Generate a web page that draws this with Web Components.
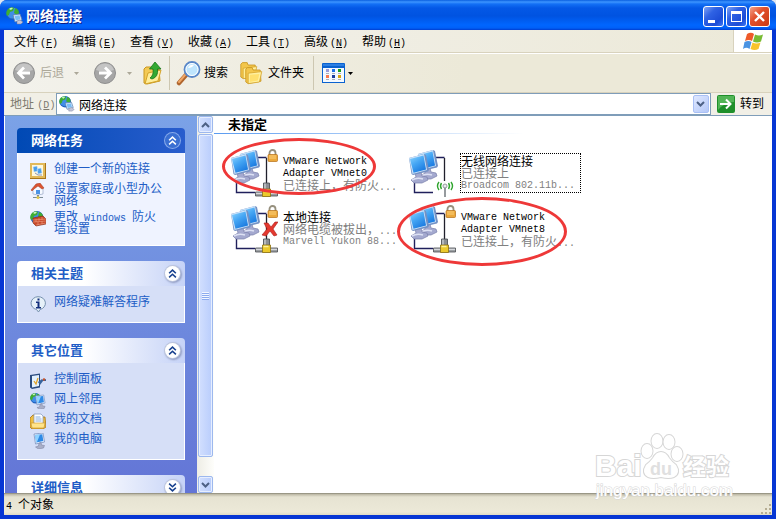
<!DOCTYPE html>
<html lang="zh-CN">
<head>
<meta charset="utf-8">
<title>网络连接</title>
<style>
    body {
        margin: 0;
        background: #dfe6f2;
        font: 12px/12px "Liberation Sans", "Noto Sans CJK SC", sans-serif;
        color: #000;
    }
</style>
</head>
<body>
<xp-window>
    <xp-titlebar slot="title">网络连接</xp-titlebar>
    <xp-menubar slot="bars">
        <xp-menu key="F">文件</xp-menu>
        <xp-menu key="E">编辑</xp-menu>
        <xp-menu key="V">查看</xp-menu>
        <xp-menu key="A">收藏</xp-menu>
        <xp-menu key="T">工具</xp-menu>
        <xp-menu key="N">高级</xp-menu>
        <xp-menu key="H">帮助</xp-menu>
    </xp-menubar>
    <xp-toolbar slot="bars"></xp-toolbar>
    <xp-addressbar slot="bars" value="网络连接"></xp-addressbar>

    <xp-taskpane slot="side">
        <xp-group primary heading="网络任务">
            <xp-task icon="newconn">创建一个新的连接</xp-task>
            <xp-task icon="home">设置家庭或小型办公网络</xp-task>
            <xp-task icon="firewall">更改<xp-latin> Windows </xp-latin>防火墙设置</xp-task>
        </xp-group>
        <xp-group heading="相关主题">
            <xp-task icon="info">网络疑难解答程序</xp-task>
        </xp-group>
        <xp-group heading="其它位置">
            <xp-task icon="control">控制面板</xp-task>
            <xp-task icon="places">网上邻居</xp-task>
            <xp-task icon="docs">我的文档</xp-task>
            <xp-task icon="computer">我的电脑</xp-task>
        </xp-group>
        <xp-group collapsed heading="详细信息"></xp-group>
    </xp-taskpane>

    <xp-folder heading="未指定">
        <xp-connection kind="lan" lock marked>
            <xp-latin slot="name">VMware Network Adapter VMnet0</xp-latin>
            <span>已连接上，有防火<xp-latin>...</xp-latin></span>
        </xp-connection>
        <xp-connection kind="wifi" selected>
            <span slot="name">无线网络连接</span>
            <span>已连接上</span>
            <xp-latin>Broadcom 802.11b...</xp-latin>
        </xp-connection>
        <xp-connection kind="lan" lock broken>
            <span slot="name">本地连接</span>
            <span>网络电缆被拔出，<xp-latin>...</xp-latin></span>
            <xp-latin>Marvell Yukon 88...</xp-latin>
        </xp-connection>
        <xp-connection kind="lan" lock marked="wide">
            <xp-latin slot="name">VMware Network Adapter VMnet8</xp-latin>
            <span>已连接上，有防火<xp-latin>...</xp-latin></span>
        </xp-connection>
    </xp-folder>

    <xp-statusbar slot="status"><xp-latin>4 </xp-latin>个对象</xp-statusbar>
    <xp-watermark slot="overlay"></xp-watermark>
</xp-window>

<script>
const GLOBE = `
    <circle cx="7" cy="6.500" r="6.500" fill="#1f5fbe"/><circle cx="6.500" cy="6" r="5.500" fill="#3f8ee8"/>
    <path d="M2 2q3-3 6-1l-1 3-3 1-1 3-2 1q-2-4 1-7zM9 1q4 1 4 5l-2 2-3-2z" fill="#3fae32"/>
    <path d="M3 2q2-2 4-1l-2 2z" fill="#c9f5bf"/>`;

const PC = `
    <path d="M4 1l9-1 1.500 9-9 2z" fill="#eef4ff" stroke="#6d87b8" stroke-width=".7"/>
    <path d="M5 2l7.300-.8 1 6.800-7 1.500z" fill="#2f8ae6"/>
    <path d="M5 2l5-.5-3 7.500-1 .4z" fill="#8fd2ff"/>
    <path d="M9 10l2-.5.5 2.500 3 .5-1 2.500-5 1-3-2 3-1z" fill="#a9afc8" stroke="#757b9b" stroke-width=".5"/>`;

const FOLDER = `
    <path d="M1 4l2-2h6l1 3h9l1 14-16 3-3-2z" fill="#f3c64b" stroke="#c7931d"/>
    <path d="M4 9l17-2-3 13-14 2z" fill="#fff0a0" stroke="#d5a52c"/>
    <path d="M6 11l12-1-2 8-10 2z" fill="#ffe06e"/>`;

const CIRCLE = `
    <circle cx="12" cy="12" r="10.500" fill="#a6a6a6" stroke="#8f8f8f"/>
    <path d="M3 9a9.500 9.500 0 0 1 18 0q-9 3-18 0z" fill="#c4c4c4"/>`;

// name: [viewBox width, viewBox height, markup]
const ICONS = {
    app: [18, 18, `${GLOBE}
        <path d="M7 8l7-1 2 6-7 2z" fill="#d9ecff" stroke="#5c7fae" stroke-width=".8"/>
        <path d="M8.500 9l5-.7 1 4-4.700 1.200z" fill="#79bdf5"/>
        <path d="M11 14l3-1 3 2-2 2-4 0z" fill="#c3c6da" stroke="#777b99" stroke-width=".5"/>`],
    newconn: [16, 16, `
        <path d="M0 0h16v16H0z" fill="#a8751a"/><path d="M0 0h15v15H0z" fill="#e2b95a"/>
        <path d="M2 2h11v11H2z" fill="#fff8dc"/>
        <path d="M3 4l4-1 1 5-4 1zM7 6l4-1 1 5-4 1z" fill="#4a9eea" stroke="#cde4fb" stroke-width=".5"/>
        <path d="M5 10l3 2 4 0" stroke="#8e94b4" fill="none"/>`],
    home: [16, 16, `
        <path d="M3 6l5-4 5 3v6l-5 1-5-1z" fill="#f6f9ff" stroke="#8c9cbd" stroke-width=".6"/>
        <path d="M1 7l5-6 4-1 4 5-2 1-4-3-4 3-2 2z" fill="#dc5431" stroke="#a03a20" stroke-width=".5"/>
        <path d="M6 7h4v4H6z" fill="#4c93e6"/>
        <path d="M7 12h2v2h4v1H3v-1h4z" fill="#7b8a94"/><circle cx="8" cy="14.500" r="1.500" fill="#e0c649"/>`],
    firewall: [16, 16, `${GLOBE}
        <path d="M3 7l10-2 3 3v5l-10 2-3-3z" fill="#c8482a" stroke="#7f2813" stroke-width=".6"/>
        <path d="M3 9l13-1M3 11l13-1M6 14l10-2M6 8v3M9 7v3M12 6v3M8 11v3M12 10v3" stroke="#f0a184" stroke-width=".6"/>`],
    info: [16, 16, `
        <path d="M8 .7a7.200 6.500 0 0 1 2 12.800L8.500 16 6.500 13.500A7.200 6.500 0 0 1 8 .7z" fill="#e6f1f9" stroke="#7590ad"/>
        <path d="M7.500 2.500h2v2h-2zM6 5.500h3.500V11H11v1.500H6V11h1.500V7H6z" fill="#122f7c"/>`],
    control: [16, 16, `
        <path d="M0 2l10-1.500v14l-8 1.500-2-1.500z" fill="#2b4c80"/><path d="M2 3l7-1v11l-7 1.500z" fill="#e2f1ff"/>
        <path d="M4 8l2 3 2-6" fill="none" stroke="#e3a42a" stroke-width="1.300"/>
        <path d="M8 9l4-3 1 1 3-1v2l-3 0-3 4z" fill="#36639d"/><circle cx="14" cy="6.500" r="1.300" fill="#c6532c"/>`],
    places: [16, 16, `<g transform="scale(.8)">${GLOBE}</g><g transform="translate(2 2) scale(.9)">${PC}</g>`],
    docs: [16, 16, `
        <path d="M0 5l3-3h3l2 2h7l1 10-3 2H2l-2-2z" fill="#eebe43" stroke="#a87514" stroke-width=".8"/>
        <path d="M4 1h7l2 2v9H4z" fill="#fff" stroke="#7b93ba" stroke-width=".7"/>
        <path d="M5.500 4h5M5.500 6h6M5.500 8h6" stroke="#86aee0"/>
        <path d="M1 10h14l-1 5H2z" fill="#ffe48a" stroke="#c69127" stroke-width=".6"/>`],
    computer: [16, 16, PC],
    back: [24, 24, `${CIRCLE}<path d="M18 12H7M12 6.500L6.500 12l5.500 5.500" fill="none" stroke="#fff" stroke-width="2.800"/>`],
    forward: [24, 24, `${CIRCLE}<path d="M6 12h11M12 6.500l5.500 5.500-5.500 5.500" fill="none" stroke="#fff" stroke-width="2.800"/>`],
    up: [20, 24, `
        <path d="M1 8l2-2h5l1 2h7l1 12-13 3-3-1z" fill="#f4ca55" stroke="#c8961f"/>
        <path d="M5 12l13-3-3 11-13 3z" fill="#ffee9b" stroke="#d3a32a"/>
        <path d="M12 1l6 7h-3.500q1 8-5.500 10l-2-1q4-3 3-9H6.500z" fill="#34a932" stroke="#16761a" stroke-width=".8"/>`],
    search: [26, 26, `
        <path d="M3 23l7-8" stroke="#b0662e" stroke-width="4.500" stroke-linecap="round"/>
        <path d="M3 22l6-7" stroke="#f0a767" stroke-width="2" stroke-linecap="round"/>
        <circle cx="16" cy="9.500" r="7.500" fill="#bfe5fd" stroke="#5a87c8" stroke-width="1.800"/>
        <circle cx="16" cy="9.500" r="6" fill="none" stroke="#fff"/>
        <path d="M12 8q2-4 6-3-2 3-6 3z" fill="#fff"/>`],
    folders: [24, 24, `<g transform="scale(.8)">${FOLDER}</g><g transform="translate(5 5) scale(.8)">${FOLDER}</g>`],
    views: [23, 20, `
        <path d="M0 1q0-1 1-1h21q1 0 1 1v19H0z" fill="#0a62d0"/><path d="M1 5h21v14H1z" fill="#f4f9ff"/>
        <path d="M1 2h21" stroke="#4f9cf5"/>
        <path d="M4 6h3v3H4z" fill="#9c9cd8"/><path d="M10 6h3v3h-3z" fill="#1a70e8"/><path d="M16 6h3v3h-3z" fill="#169c20"/>
        <path d="M4 12h3v3H4z" fill="#fa7a4e"/><path d="M10 12h3v3h-3z" fill="#1a3b9c"/><path d="M16 12h3v3h-3z" fill="#d8a412"/>
        <path d="M4 10.500h3m3 0h3m3 0h3M4 16.500h3m3 0h3m3 0h3" stroke="#aab0bc"/>`],
    flag: [20, 19, `
        <path d="M4 2q4-2.500 7 0L9 9Q6 7 2 9z" fill="#ee5a2a"/><path d="M12 2.500q4 2 8 0l-2 7q-4 2-8 0z" fill="#78bb33"/>
        <path d="M1.500 10q4-2 7 0l-2 7q-3-2.500-6.500 0z" fill="#4a93e2"/><path d="M9.500 10.500q4 2 8 0l-2 6.500q-4 2-8 0z" fill="#f8c32c"/>`],
    go: [18, 18, `
        <rect width="18" height="18" rx="2" fill="#1f8f2a"/><path d="M1 1h16v6Q8 7 1 15z" fill="#52b556"/>
        <path d="M3 9h10M9 4.500L13.500 9 9 13.500" fill="none" stroke="#fff" stroke-width="2"/>`],
    caret: [5, 3, `<path d="M0 0h5L2.500 3z" fill="currentColor"/>`],
    chevron: [9, 6, `<path d="M1 1l3.500 3.500L8 1" fill="none" stroke="#4d6185" stroke-width="2"/>`],
    double: [8, 8, `<path d="M1 3.800L4 1l3 2.800M1 7.500L4 4.700l3 2.800" fill="none" stroke="currentColor" stroke-width="1.400"/>`],
    min: [19, 19, `<path d="M4 13h7v3H4z" fill="#fff"/>`],
    max: [19, 19, `<path d="M4 4h11v11H4zM5 7v7h9V7z" fill="#fff" fill-rule="evenodd"/>`],
    close: [19, 19, `<path d="M5 5l9 9M14 5l-9 9" stroke="#fff" stroke-width="2.400"/>`],
    grip: [12, 12, `<path d="M9 1h2v2H9zM5 5h2v2H5zM9 5h2v2H9zM1 9h2v2H1zM5 9h2v2H5zM9 9h2v2H9z" fill="#b5ad93"/>`]
};

const svg = (name, w, h) => {
    const [vw, vh, body] = ICONS[name];
    return `<svg width="${w || vw}" height="${h || vh}" viewBox="0 0 ${vw} ${vh}" aria-hidden="true">${body}</svg>`;
};

function define(name, css, html) {
    customElements.define(name, class extends HTMLElement {
        connectedCallback() {
            const root = this.attachShadow({ mode: 'open' });
            const markup = typeof html === 'function' ? html(this) : html;
            root.innerHTML = `<style>
                    :host, * { box-sizing: border-box; }
                    button, input { font: inherit; color: inherit; border: 0; padding: 0; margin: 0; background: none; }
                    svg { display: block; flex: none; }
                    ${css}
                </style>${markup.trim()}`;
        }
    });
}

define('xp-latin', `
    :host { font: 10px/8px "Liberation Mono", monospace; }
`, `<slot></slot>`);

define('xp-window', `
    :host {
        display: flex;
        flex-direction: column;
        height: 100vh;
        position: relative;
        border-radius: 7px 7px 0 0;
        overflow: hidden;
        background: #0a46dc;
    }
    .frame {
        flex: 1;
        min-height: 0;
        display: flex;
        flex-direction: column;
        border: solid #0636d4;
        border-width: 0 4px 4px;
        background: #ece9d8;
    }
    .body { flex: 1; min-height: 0; display: flex; background: #fff; }
`, `
    <slot name="title"></slot>
    <div class="frame">
        <slot name="bars"></slot>
        <div class="body"><slot name="side"></slot><slot></slot></div>
        <slot name="status"></slot>
    </div>
    <slot name="overlay"></slot>
`);

define('xp-titlebar', `
    :host {
        display: flex;
        flex: none;
        align-items: center;
        gap: 2px;
        height: 30px;
        padding: 2px 6px 0;
        background: linear-gradient(#0a5fe0, #3d95ff 2px, #1370f5 4px, #0458e6 8px, #0053e1 16px, #0066ff 25px, #0060f8 28px, #003dd0);
        color: #fff;
    }
    .title { flex: 1; font-size: 14px; line-height: 18px; font-weight: bold; text-shadow: 1px 1px #0a1883; }
    button {
        width: 21px;
        height: 21px;
        border: 1px solid #fff;
        border-radius: 3px;
        background: linear-gradient(135deg, #7fa3f5, #2f62e4 35%, #1c4cd6 75%, #3d79f5);
    }
    .close { background: linear-gradient(135deg, #f3a28a, #e2512d 40%, #c93a14); }
`, `
    ${svg('app')}
    <span class="title"><slot></slot></span>
    <button aria-label="最小化">${svg('min')}</button>
    <button aria-label="最大化">${svg('max')}</button>
    <button class="close" aria-label="关闭">${svg('close')}</button>
`);

define('xp-menubar', `
    :host {
        display: flex;
        flex: none;
        height: 24px;
        background: linear-gradient(90deg, #f3f2ee, #ece9d8);
        border-bottom: 1px solid #fff;
        box-shadow: inset 0 -1px #d8d2bd;
    }
    nav { flex: 1; display: flex; align-items: center; gap: 16px; padding-left: 10px; }
    .flag { width: 39px; display: grid; place-items: center; background: #fff; border-left: 1px solid #d8d2bd; border-bottom: 1px solid #d8d2bd; }
`, `<nav><slot></slot></nav><div class="flag">${svg('flag')}</div>`);

define('xp-menu', `
    :host { display: block; }
    button { display: flex; gap: 2px; align-items: baseline; width: 42px; white-space: nowrap; }
    u { text-underline-offset: 1px; }
`, el => `<button><slot></slot><xp-latin>(<u>${el.getAttribute('key')}</u>)</xp-latin></button>`);

define('xp-toolbar', `
    :host {
        display: flex;
        flex: none;
        align-items: center;
        gap: 6px;
        height: 39px;
        padding: 0 8px;
        background: linear-gradient(90deg, #f3f2ec, #ece9d8 60%);
        border-bottom: 1px solid #d8d2bd;
    }
    button, .label { display: flex; align-items: center; gap: 4px; }
    .nav { gap: 10px; color: #aca899; padding-right: 8px; }
    .nav + .nav { padding-right: 5px; }
    .search { gap: 2px; padding-right: 6px; }
    .folders { padding-right: 3px; }
    .views { gap: 3px; padding-left: 2px; }
    hr { width: 1px; height: 34px; margin: 0; border: 0; background: #cdc7b1; }
`, `
    <button class="nav" disabled><span class="label">${svg('back')}后退</span>${svg('caret')}</button>
    <button class="nav" disabled aria-label="前进">${svg('forward')}${svg('caret')}</button>
    <button aria-label="向上">${svg('up')}</button>
    <hr>
    <button class="search">${svg('search')}搜索</button>
    <button class="folders">${svg('folders')}文件夹</button>
    <hr>
    <button class="views" aria-label="查看">${svg('views')}${svg('caret')}</button>
`);

define('xp-addressbar', `
    :host {
        display: flex;
        flex: none;
        align-items: center;
        height: 23px;
        padding: 0 8px 0 6px;
        background: #f1efe6;
        border-bottom: 1px solid #7f9db9;
    }
    label { width: 46px; color: #7d7a6f; white-space: nowrap; }
    .combo {
        flex: 1;
        display: flex;
        align-items: center;
        gap: 4px;
        height: 22px;
        padding: 0 1px 0 2px;
        background: #fff;
        border: 1px solid #7f9db9;
    }
    input { flex: 1; min-width: 0; height: 18px; outline: 0; }
    .drop {
        width: 16px;
        height: 18px;
        display: grid;
        place-items: center;
        border: 1px solid #a9c0f5;
        border-radius: 2px;
        background: linear-gradient(135deg, #dfe8ff, #b4c8f8);
    }
    .go { display: flex; align-items: center; gap: 5px; margin-left: 6px; }
`, el => `
    <label for="path">地址 <xp-latin>(<u>D</u>)</xp-latin></label>
    <div class="combo">
        ${svg('app', 16, 16)}
        <input id="path" value="${el.getAttribute('value')}">
        <button class="drop" aria-label="展开">${svg('chevron')}</button>
    </div>
    <button class="go">${svg('go')}转到</button>
`);

define('xp-taskpane', `
    :host { display: flex; width: 210px; flex: none; }
    .groups {
        flex: 1;
        min-width: 0;
        overflow: hidden;
        display: flex;
        flex-direction: column;
        gap: 15px;
        padding: 12px;
        border-left: 1px solid #fff;
        background: linear-gradient(#7ba2e7, #6375d6);
    }
`, `<div class="groups"><slot></slot></div><xp-scrollbar></xp-scrollbar>`);

define('xp-scrollbar', `
    :host {
        display: flex;
        flex-direction: column;
        gap: 1px;
        width: 17px;
        flex: none;
        padding: 0 1px;
        background: linear-gradient(90deg, #eeede5, #fefefb);
    }
    button, .thumb { border: 1px solid #9db8ee; border-radius: 2px; background: linear-gradient(90deg, #d2dffe, #b9cdfc); box-shadow: inset 0 0 0 1px #e6eeff; }
    button { height: 17px; display: grid; place-items: center; }
    .up svg { transform: rotate(180deg); }
    .track { flex: 1; display: flex; flex-direction: column; padding-bottom: 18px; }
    .thumb { flex: 1; display: grid; place-items: center; }
    .thumb i { width: 7px; height: 8px; background: repeating-linear-gradient(#f3f7ff 0 1px, #8cabef 1px 2px); }
`, `
    <button class="up" aria-label="向上滚动">${svg('chevron')}</button>
    <div class="track"><div class="thumb"><i></i></div></div>
    <button aria-label="向下滚动">${svg('chevron')}</button>
`);

define('xp-group', `
    :host { display: block; flex: none; color: #215dc6; }
    header {
        display: flex;
        align-items: center;
        justify-content: space-between;
        height: 25px;
        padding: 0 5px 0 14px;
        border-radius: 4px 4px 0 0;
        background: linear-gradient(90deg, #fff 40%, #c6d3f7);
    }
    h2 { margin: 0; font-size: 13px; line-height: 16px; }
    button {
        width: 15px;
        height: 15px;
        display: grid;
        place-items: center;
        border-radius: 50%;
        background: #fff;
        color: #17408e;
        box-shadow: 0 0 0 1px #bcc5dd, 1px 1px 2px 1px #8e9ac0;
    }
    .body { display: grid; gap: 4px; padding: 10px 11px 10px 12px; background: #d6dff7; border: solid #fff; border-width: 0 1px 1px; }
    :host([primary]) header { background: linear-gradient(90deg, #0049b4, #295dcd); color: #fff; }
    :host([primary]) .body { background: #eff3ff; }
    :host([primary]) button { background: #3a6fd2; color: #fff; box-shadow: 0 0 0 1px #86a9ea; }
    :host([collapsed]) .body { display: none; }
    :host([collapsed]) button svg { transform: rotate(180deg); }
`, el => `
    <header><h2>${el.getAttribute('heading')}</h2><button aria-label="展开或折叠">${svg('double', 9, 9)}</button></header>
    <div class="body"><slot></slot></div>
`);

define('xp-task', `
    :host { display: block; }
    a { display: flex; gap: 8px; min-height: 16px; color: #215dc6; text-decoration: none; }
    span { width: 112px; }
`, el => `<a href="#">${svg(el.getAttribute('icon'))}<span><slot></slot></span></a>`);

define('xp-folder', `
    :host { display: block; flex: 1; min-width: 0; background: #fff; }
    h2 { margin: 0; padding: 1px 14px 0; font-size: 13px; line-height: 16px; }
    .rule { height: 1px; max-width: 310px; background: linear-gradient(90deg, #5a9bf0, #fff); }
    .items { display: grid; grid-template-columns: repeat(2, 172px); gap: 8px 6px; padding: 15px 16px; }
`, el => `
    <h2>${el.getAttribute('heading')}</h2>
    <div class="rule"></div>
    <div class="items"><slot></slot></div>
`);

const MONITOR = `
    <path d="M7 24l6-1 1 4 5 1 1 3-6 3-8 0-3-3 5-3z" fill="#a4a9cf" stroke="#7a80ab" stroke-width=".7"/>
    <path d="M4 31q5-3 11-1" fill="none" stroke="#dde1f3" stroke-width="1.500"/>
    <path d="M1 9l15-4 2 1 3 15-1 1.500-15 3.500-1.500-1z" fill="#7391c4"/>
    <path d="M1 9l15-4 3 16-14.500 4z" fill="#c9e2fa"/>
    <path d="M2 10l13.500-3.600 2.500 14-12.500 3.400z" fill="url(#screen)"/>`;

const LINK_ART = {
    lock: `
        <path d="M39.500 7V4a3 3 0 0 1 6 0v3" fill="none" stroke="#96907e" stroke-width="1.800"/>
        <rect x="38" y="5.500" width="9.500" height="7" rx="1" fill="#eba83b" stroke="#b56f17" stroke-width=".7"/>
        <path d="M39 7h7M39 9h7" stroke="#ffd98b" stroke-width=".8"/>`,
    lan: `
        <path d="M36.500 9v26" stroke="#20202c" stroke-width="1.300"/>
        <path d="M33.500 34h6v7h-6z" fill="#8b8f94" stroke="#42464b" stroke-width=".8"/><path d="M35 34.500v6" stroke="#dfe2e6"/>
        <path d="M25.500 43h22v4h-22z" fill="#9ca0a3" stroke="#4a4d50" stroke-width=".8"/><path d="M26 44.300h21" stroke="#e5e7ea"/>
        <path d="M32.500 40h8v7.500h-8z" fill="#ebc92c" stroke="#8b7010" stroke-width=".8"/><path d="M33.500 41.500h5" stroke="#fff19a" stroke-width="1.500"/>`,
    wifi: `
        <path d="M36.500 9v23" stroke="#20202c" stroke-width="1.300"/>
        <path d="M37 37v11" stroke="#8b9094" stroke-width="1.800"/><circle cx="37" cy="37" r="2" fill="#e8ecee" stroke="#80868a" stroke-width=".8"/>
        <path d="M33.500 34q-2 3 0 6M40.500 34q2 3 0 6M31 33q-3 4 0 8M43 33q3 4 0 8" fill="none" stroke="#31a52f" stroke-width="1.400"/>`,
    broken: `<path d="M34 18l4 0 3 4 4-5 3 0-5 7 4 6-3 1-4-5-4 5-4-1 5-6z" fill="#e4392f" stroke="#a81d19" stroke-width=".6"/>`
};

define('xp-connection', `
    :host { display: block; position: relative; }
    button { display: flex; align-items: center; gap: 5px; width: 100%; height: 48px; text-align: left; }
    .text { display: block; flex: 1; padding-top: 2px; white-space: nowrap; color: #808080; }
    .name { display: block; color: #000; white-space: normal; }
    ::slotted(*) { display: block; line-height: 12px; }
    :host([selected]) .text { outline: 1px dotted #000; }
    /* hand-drawn ring laid over the item */
    .ring { display: none; position: absolute; inset: -11px 26px 2px -8px; border: 3px solid #ee3838; border-radius: 50%; pointer-events: none; }
    :host([marked]) .ring { display: block; }
    :host([marked="wide"]) .ring { inset: -8px 13px -13px -11px; }
`, el => `
    <button>
        <svg width="48" height="48" viewBox="0 0 48 48" aria-hidden="true">
            <linearGradient id="screen" x1="0" y1="0" x2=".6" y2="1">
                <stop offset="0" stop-color="#8ed6ff"/><stop offset=".5" stop-color="#45a6f4"/><stop offset="1" stop-color="#1c7be0"/>
            </linearGradient>
            <path d="M27 8.500h9.500M6.500 34v9.500H25" fill="none" stroke="#20205c" stroke-width="1.400"/>
            <g transform="translate(9 -4)">${MONITOR}</g>${MONITOR}
            ${LINK_ART[el.getAttribute('kind')]}
            ${el.hasAttribute('lock') ? LINK_ART.lock : ''}
            ${el.hasAttribute('broken') ? LINK_ART.broken : ''}
        </svg>
        <span class="text"><span class="name"><slot name="name"></slot></span><slot></slot></span>
    </button>
    <div class="ring"></div>
`);

define('xp-statusbar', `
    :host {
        display: flex;
        align-items: center;
        height: 22px;
        flex: none;
        padding-left: 2px;
        background: linear-gradient(#b9b5a2, #e6e3d2 3px, #ece9d8 18px, #dedac6);
        border-top: 1px solid #9a9786;
    }
    span { flex: 1; }
    svg { align-self: flex-end; }
`, `<span><slot></slot></span>${svg('grip')}`);

define('xp-watermark', `
    :host { position: absolute; right: 40px; bottom: 14px; pointer-events: none; }
    .logo { fill: #fff; stroke: #d6d6d6; stroke-width: 2; paint-order: stroke; }
    .inner { fill: #e0e0e0; stroke: none; }
    text { font-family: "Liberation Sans", "Noto Sans CJK SC", sans-serif; font-weight: bold; }
    .url { font-weight: normal; stroke-width: 1; }
`, `
    <svg width="142" height="72" viewBox="0 0 142 72">
        <g class="logo">
            <text x="1" y="43" font-size="30">Bai</text>
            <path d="M67 19q5 0 8 6 3 4 7 7 5 8-2 12-5 2-13 0-8 2-13 0-7-4-2-12 4-3 7-7 3-6 8-6z"/>
            <ellipse cx="53" cy="18" rx="5.500" ry="7"/><ellipse cx="63" cy="8" rx="5.500" ry="7"/>
            <ellipse cx="75" cy="9" rx="5.500" ry="7"/><ellipse cx="83" cy="21" rx="5.500" ry="7"/>
            <text class="inner" x="56" y="42" font-size="18">du</text>
            <text x="89" y="42" font-size="23">经验</text>
            <text class="url" x="2" y="63" font-size="17">jingyan.baidu.com</text>
        </g>
    </svg>
`);
</script>
</body>
</html>
